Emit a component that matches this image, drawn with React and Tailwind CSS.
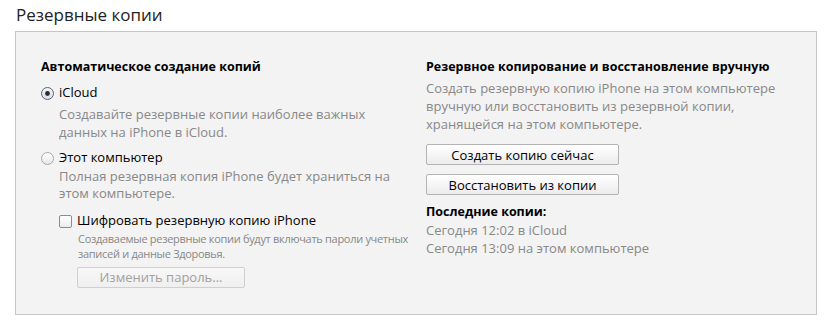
export default function App() {
  const font = { fontFamily: '"Open Sans", "Noto Sans", sans-serif' };
  return (
    <div className="w-[832px] h-[334px] bg-white font-['Open_Sans',sans-serif]" style={font}>
      {/* ——— Title ——— */}
      <h1 className="pl-4 pt-[3px] text-[17px] leading-[24px] text-[#222]">Резервные копии</h1>

      {/* ——— Panel ——— */}
      <section className="ml-[15px] mt-[4px] w-[802px] h-[284px] border border-[#c6c6c6] bg-[#f3f3f3] flex pt-[28px] pl-[25px]">
        {/* Left column */}
        <div className="w-[385px] flex flex-col">
          <h2 className="text-[12.5px] leading-[14px] font-bold text-black">Автоматическое создание копий</h2>

          <label className="mt-[10px] flex items-center gap-[5px] h-[18px]">
            <Radio checked />
            <span className="text-[13px] text-black">iCloud</span>
          </label>
          <p className="mt-[3px] pl-[18px] text-[13px] leading-[18px] text-[#888]">
            Создавайте резервные копии наиболее важных
            <br />
            данных на iPhone в iCloud.
          </p>

          <label className="mt-[8px] flex items-center gap-[5px] h-[18px]">
            <Radio />
            <span className="text-[13px] text-black">Этот компьютер</span>
          </label>
          <p className="mt-[1px] pl-[18px] text-[13px] leading-[17px] text-[#888]">
            Полная резервная копия iPhone будет храниться на
            <br />
            этом компьютере.
          </p>

          <label className="mt-[10px] ml-[18px] flex items-center gap-[5px] h-[18px]">
            <span className="w-[13px] h-[13px] rounded-[2px] border border-[#8c8c8c] bg-gradient-to-b from-white to-[#ececec]" />
            <span className="text-[13px] text-black">Шифровать резервную копию iPhone</span>
          </label>
          <p className="mt-[1px] pl-[37px] text-[11px] leading-[15px] tracking-[-0.3px] text-[#888]">
            Создаваемые резервные копии будут включать пароли учетных
            <br />
            записей и данные Здоровья.
          </p>
          <button
            type="button"
            className="mt-[6px] ml-[36px] w-[168px] h-[21px] rounded-[2px] border border-[#cfcfcf] bg-gradient-to-b from-[#f8f8f8] to-[#efefef] text-[13px] text-[#a0a0a0]"
          >
            Изменить пароль...
          </button>
        </div>

        {/* Right column */}
        <div className="flex flex-col">
          <h2 className="text-[12.5px] leading-[14px] font-bold text-black">
            Резервное копирование и восстановление вручную
          </h2>
          <p className="mt-[5px] text-[13px] leading-[18px] text-[#888]">
            Создать резервную копию iPhone на этом компьютере
            <br />
            вручную или восстановить из резервной копии,
            <br />
            хранящейся на этом компьютере.
          </p>
          <div className="mt-[11px] flex flex-col gap-[9px]">
            <Button>Создать копию сейчас</Button>
            <Button>Восстановить из копии</Button>
          </div>
          <h3 className="mt-[9px] text-[12.5px] leading-[16px] font-bold text-black">Последние копии:</h3>
          <p className="mt-[1px] text-[13px] leading-[18px] text-[#888]">
            Сегодня 12:02 в iCloud
            <br />
            Сегодня 13:09 на этом компьютере
          </p>
        </div>
      </section>
    </div>
  );
}

function Button({ children }) {
  return (
    <button
      type="button"
      className="w-[193px] h-[21px] rounded-[2px] border border-[#b4b4b4] bg-gradient-to-b from-white to-[#ececec] text-[13px] leading-[18px] text-black"
    >
      {children}
    </button>
  );
}

function Radio({ checked }) {
  return (
    <svg width="13" height="13" viewBox="0 0 13 13" className="shrink-0">
      <defs>
        <linearGradient id={checked ? "rg1" : "rg2"} x1="0" y1="0" x2="0" y2="1">
          <stop offset="0" stopColor={checked ? "#f4f6fb" : "#ffffff"} />
          <stop offset="1" stopColor={checked ? "#d8dde8" : "#e6e6e6"} />
        </linearGradient>
      </defs>
      <circle
        cx="6.5"
        cy="6.5"
        r="6"
        fill={`url(#${checked ? "rg1" : "rg2"})`}
        stroke={checked ? "#5d6470" : "#a8a8a8"}
        strokeWidth="1"
      />
      {checked && <circle cx="6.5" cy="6.5" r="2.4" fill="#2a2a2a" />}
    </svg>
  );
}
